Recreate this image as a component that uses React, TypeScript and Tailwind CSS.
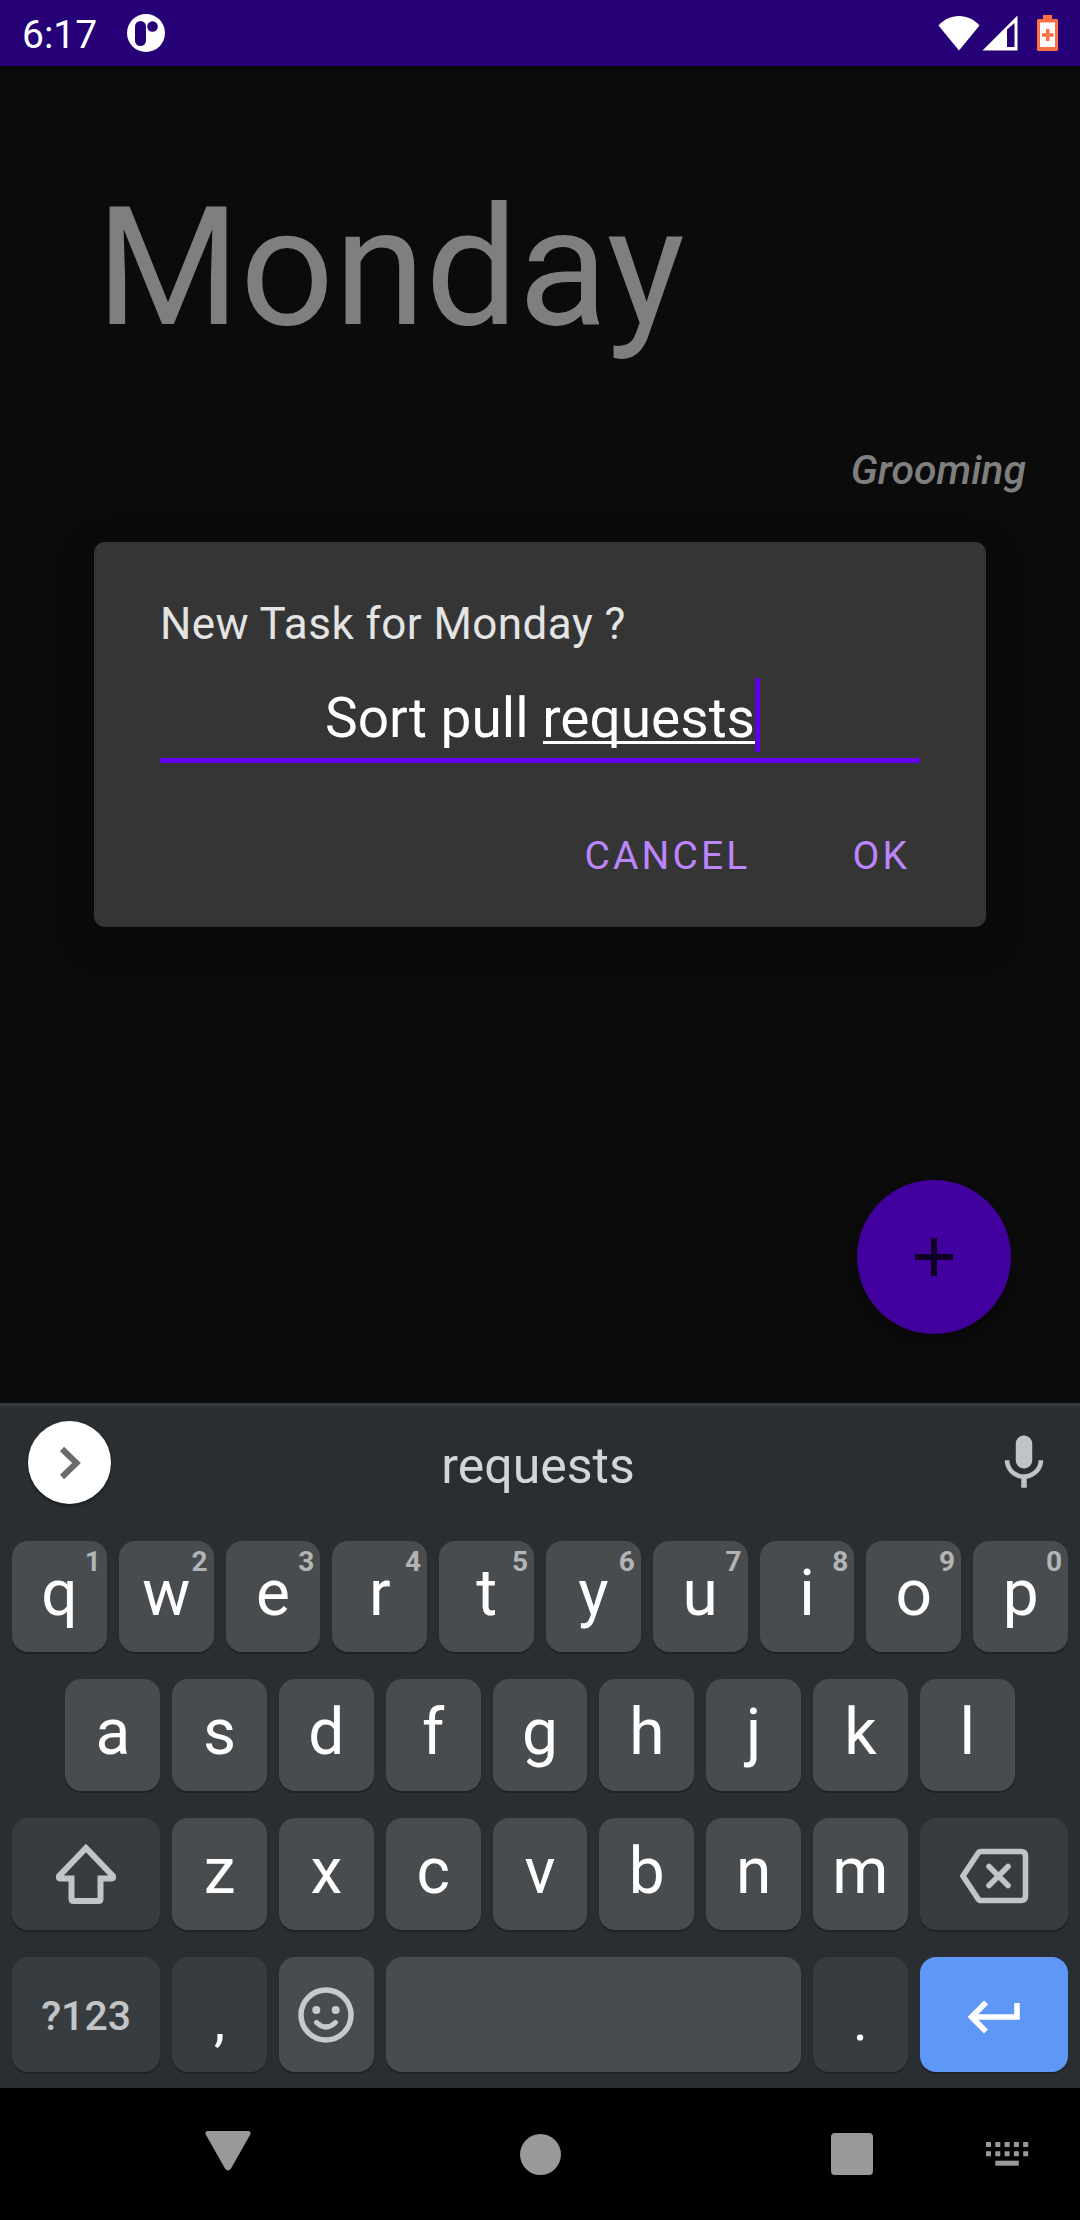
import { useState } from "react";
import type { ReactNode } from "react";

type KeyProps = {
  label: string;
  children?: ReactNode;
  hint?: string;
  className?: string;
};

const topRow = ["q", "w", "e", "r", "t", "y", "u", "i", "o", "p"];
const middleRow = ["a", "s", "d", "f", "g", "h", "j", "k", "l"];
const bottomRow = ["z", "x", "c", "v", "b", "n", "m"];

function Key({ label, children, hint, className = "col-span-2 bg-[#494c4e] pb-[5px] text-[64px]" }: KeyProps) {
  return (
    <button
      type="button"
      aria-label={label}
      className={`relative flex items-center justify-center rounded-2xl leading-none text-white shadow-[0_2px_0_#1f2326] ${className}`}
    >
      {children}
      {hint && (
        <span className="absolute top-[7px] right-[6px] text-[28px] leading-7 font-bold text-[#b2b4b5]">{hint}</span>
      )}
    </button>
  );
}

function StatusBar() {
  return (
    <header className="flex h-[66px] items-center bg-[#260077] px-[22px] text-white">
      <span className="pt-[3px] text-[39px] leading-[46px]">6:17</span>
      <svg className="ml-[30px] size-[38px]" viewBox="0 0 38 38" aria-label="App notification">
        <circle cx="19" cy="19" r="19" fill="#fff" />
        <rect x="8" y="7" width="11" height="25" rx="5.500" fill="#260077" />
        <circle cx="25.500" cy="12.500" r="5.300" fill="#260077" />
      </svg>
      <svg className="ml-auto h-9 w-[42px]" viewBox="0 0 42 36" aria-label="Wi-Fi">
        <path d="M21 35.500L.5 10.500C6 4.500 13 1 21 1s15 3.500 20.500 9.500z" fill="#fff" />
      </svg>
      <svg className="ml-[2px] size-9" viewBox="0 0 36 36" aria-label="Mobile signal">
        <path d="M35.500.5V35.500H.5z" fill="#fff" />
        <path d="M25 14.500L32.500 8V32H25z" fill="#260077" />
      </svg>
      <svg className="ml-[19px] h-9 w-[21px]" viewBox="0 0 21 36" aria-label="Battery low">
        <path d="M6 0h9v4h4.500Q21 4 21 5.500V34.500Q21 36 19.500 36h-18Q0 36 0 34.500v-29Q0 4 1.500 4H6z" fill="#ff7043" />
        <path d="M3 7.500h15V32H3z" fill="#fff" />
        <path d="M9 14h3.500v4.300h4v3.500h-4V26H9v-4.200H5v-3.500h4z" fill="#ff7043" />
      </svg>
    </header>
  );
}

function TaskDialog() {
  const [task, setTask] = useState("Sort pull requests");
  return (
    <div className="absolute inset-0 flex items-center justify-center px-[94px]">
      <form
        role="dialog"
        aria-modal="true"
        aria-labelledby="task-title"
        className="w-full rounded-[11px] bg-[#353535] px-[66px] pt-[52px] pb-[21px] shadow-[0_12px_40px_rgba(0,0,0,0.3)]"
        onSubmit={(event) => event.preventDefault()}
      >
        <label
          id="task-title"
          htmlFor="task"
          className="block text-[44px] leading-[60px] tracking-[0.01em] text-[#e4e4e4]"
        >
          New Task for Monday ?
        </label>
        <div className="relative mt-6 border-b-[5px] border-[#6200ee]">
          <input
            id="task"
            type="text"
            value={task}
            onChange={(event) => setTask(event.target.value)}
            className="block h-20 w-full bg-transparent text-center text-[55px] text-white caret-[#6200ee] outline-none"
          />
          <span className="absolute top-[63px] left-1/2 ml-[3px] h-[3px] w-[212px] bg-white" />
          <span className="absolute top-0 left-1/2 ml-[215px] h-[74px] w-[5px] bg-[#6200ee]" />
        </div>
        <div className="mt-11 -mr-3 flex justify-end gap-[58px] text-[39px] tracking-[0.08em] text-[#bb86fc]">
          <button type="button" className="h-[99px] px-[22px]">
            CANCEL
          </button>
          <button type="submit" className="h-[99px] px-[22px]">
            OK
          </button>
        </div>
      </form>
    </div>
  );
}

function Keyboard() {
  const darkKey = "bg-[#373c40]";
  return (
    <section aria-label="Keyboard" className="border-t-[3px] border-[#373b3e] bg-[#292e32]">
      <div className="flex h-[113px] items-center justify-between pr-[23px] pl-7">
        <button
          type="button"
          aria-label="Expand toolbar"
          className="flex size-[83px] items-center justify-center rounded-full bg-white shadow-[0_2px_3px_rgba(0,0,0,0.4)]"
        >
          <svg className="size-[34px]" viewBox="0 0 34 34" fill="none" stroke="#6b6b6b" strokeWidth="6">
            <path d="M9 3L23.500 17L9 31" />
          </svg>
        </button>
        <button type="button" className="pt-[7px] text-[50px] leading-[60px] text-[#d4d5d6]">
          requests
        </button>
        <button type="button" aria-label="Voice input" className="ml-[26px]">
          <svg className="size-[66px]" viewBox="0 0 24 24" fill="#c2c3c5">
            <path d="M12 14c1.660 0 2.990-1.340 2.990-3L15 5c0-1.660-1.340-3-3-3S9 3.340 9 5v6c0 1.660 1.340 3 3 3zm5.300-3c0 3-2.540 5.100-5.300 5.100S6.700 14 6.700 11H5c0 3.410 2.720 6.230 6 6.720V21h2v-3.280c3.280-.48 6-3.300 6-6.720h-1.700z" />
          </svg>
        </button>
      </div>
      <div className="grid grid-cols-[repeat(20,minmax(0,1fr))] grid-rows-[111px_112px_112px_115px] gap-x-3 gap-y-[27px] px-3 pt-[22px] pb-4">
        {topRow.map((letter, index) => (
          <Key key={letter} label={letter} hint={String((index + 1) % 10)}>
            {letter}
          </Key>
        ))}
        {middleRow.map((letter, index) => (
          <Key
            key={letter}
            label={letter}
            className={
              index === 0
                ? "col-span-2 col-start-2 bg-[#494c4e] pb-[5px] text-[64px]"
                : "col-span-2 bg-[#494c4e] pb-[5px] text-[64px]"
            }
          >
            {letter}
          </Key>
        ))}
        <Key label="Shift" className={`col-span-3 col-start-1 ${darkKey}`}>
          <svg className="size-[62px]" viewBox="0 0 62 62" fill="none" stroke="#c3c4c6" strokeWidth="6">
            <path d="M31 5L58 33.200Q58.800 35.500 57 35.500H45.500V56q0 2-2 2h-25q-2 0-2-2V35.500H5Q3.200 35.500 4 33.200z" />
          </svg>
        </Key>
        {bottomRow.map((letter) => (
          <Key key={letter} label={letter}>
            {letter}
          </Key>
        ))}
        <Key label="Backspace" className={`col-span-3 pt-1 ${darkKey}`}>
          <svg className="h-14 w-[70px]" viewBox="0 0 70 56" fill="none" stroke="#c3c4c6" strokeWidth="5.600">
            <path d="M22 3.500H62Q66.500 3.500 66.500 8V48Q66.500 52.500 62 52.500H22Q20 52.500 18.800 50.500L4 28L18.800 5.500Q20 3.500 22 3.500z" />
            <path d="M30 18.500L49 37.500M49 18.500L30 37.500" strokeLinecap="round" />
          </svg>
        </Key>
        <Key label="Symbols" className={`col-span-3 pt-1 text-[41px] ${darkKey}`}>
          <span className="font-medium text-[#c3c4c6]">?123</span>
        </Key>
        <Key label="Comma" className={`col-span-2 pt-3 text-[56px] ${darkKey}`}>
          ,
        </Key>
        <Key label="Emoji" className="col-span-2 bg-[#494c4e]">
          <svg className="size-14" viewBox="0 0 56 56" fill="none" stroke="#c8c9cb" strokeWidth="5.500">
            <circle cx="28" cy="28" r="25" />
            <circle cx="18.300" cy="23" r="4" fill="#c8c9cb" stroke="none" />
            <circle cx="37.700" cy="23" r="4" fill="#c8c9cb" stroke="none" />
            <path d="M18.500 35.500Q28 44.500 37.500 35.500" strokeWidth="5" strokeLinecap="round" />
          </svg>
        </Key>
        <Key label="Space" className="col-span-8 bg-[#494c4e]" />
        <Key label="Period" className={`col-span-2 pt-3 text-[56px] ${darkKey}`}>
          .
        </Key>
        <Key label="Enter" className="col-span-3 bg-[#5e97f6] pt-1">
          <svg className="h-[34px] w-[54px]" viewBox="0 0 54 34" fill="none" stroke="#fff" strokeWidth="5.600">
            <path d="M19 2.500L4.500 17L19 31.500M5 17H50V3" />
          </svg>
        </Key>
      </div>
    </section>
  );
}

function NavigationBar() {
  return (
    <nav aria-label="System navigation" className="relative flex h-[132px] items-center justify-around bg-black px-[72px]">
      <button type="button" aria-label="Back" className="flex size-24 items-center justify-center pb-[6px]">
        <svg className="h-10 w-[46px]" viewBox="0 0 46 40" fill="#999">
          <path d="M3 0H43Q47 0 45 4L26 37.500Q23 41.500 20 37.500L1 4Q-1 0 3 0z" />
        </svg>
      </button>
      <button type="button" aria-label="Home" className="flex size-24 items-center justify-center">
        <span className="size-[41px] rounded-full bg-[#999]" />
      </button>
      <button type="button" aria-label="Recent apps" className="flex size-24 items-center justify-center">
        <span className="size-[42px] rounded bg-[#999]" />
      </button>
      <button type="button" aria-label="Switch keyboard" className="absolute right-[51px]">
        <svg className="h-6 w-[43px]" viewBox="0 0 43 24" fill="#999">
          {[0, 9.3, 18.6, 27.9, 37.2].map((x) => (
            <path key={x} d={`M${x} 0h5v5h-5zM${x} 9.300h5v5h-5z`} />
          ))}
          <path d="M9.300 18.700h23.500v5H9.300z" />
        </svg>
      </button>
    </nav>
  );
}

export default function App() {
  return (
    <div className="flex min-h-screen flex-col bg-[#0b0b0b] font-[Roboto,sans-serif]">
      <StatusBar />
      <main className="relative flex flex-1 flex-col">
        <h1 className="pt-[106px] pl-[96px] text-[165px] leading-[192px] text-[#7f7f7f]">Monday</h1>
        <p className="mt-[82px] mr-[54px] self-end text-[41px] leading-[48px] font-medium text-[#7f7f7f] italic">
          Grooming
        </p>
        <button
          type="button"
          aria-label="Add task"
          className="mt-auto mr-[69px] mb-[69px] flex size-[154px] items-center justify-center self-end rounded-full bg-[#42009e] shadow-[0_6px_12px_rgba(0,0,0,0.2)]"
        >
          <svg className="size-[38px]" viewBox="0 0 38 38" fill="#0f0026">
            <path d="M16 0h6v16h16v6H22v16h-6V22H0v-6h16z" />
          </svg>
        </button>
        <TaskDialog />
      </main>
      <Keyboard />
      <NavigationBar />
    </div>
  );
}
